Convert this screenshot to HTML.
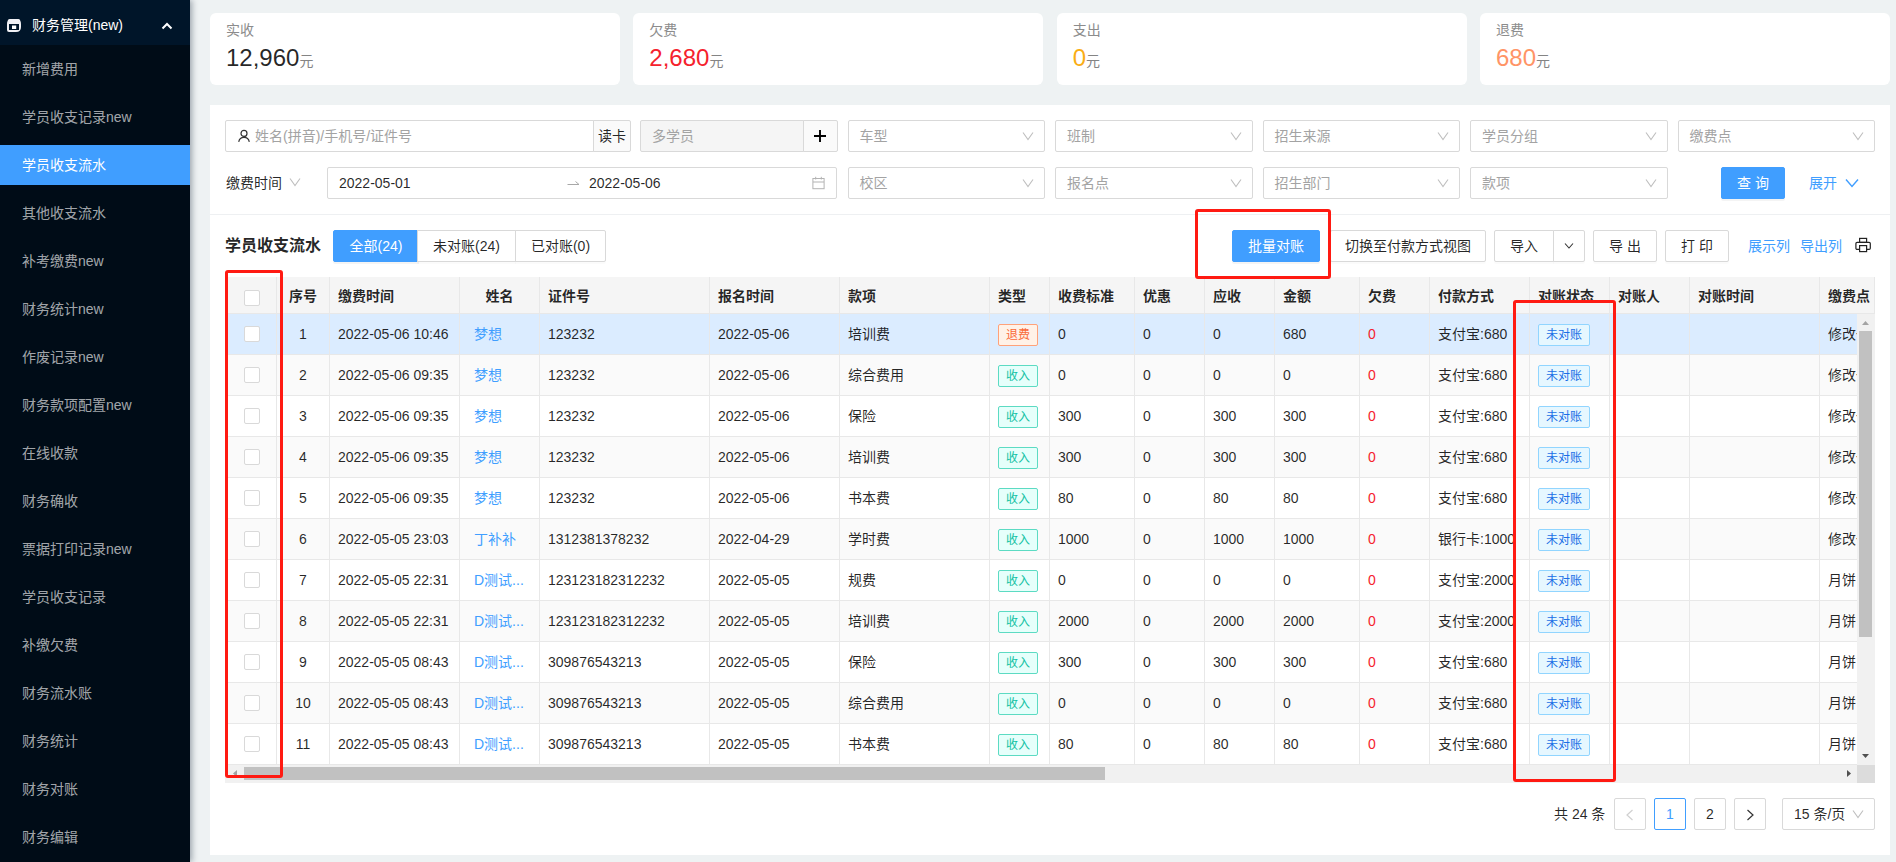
<!DOCTYPE html><html lang="zh-CN"><head><meta charset="utf-8"><title>学员收支流水</title><style>
*{box-sizing:border-box;margin:0;padding:0}
html,body{width:1896px;height:862px;overflow:hidden}
body{position:relative;background:#eef2f3;font-family:"Liberation Sans","Noto Sans CJK SC",sans-serif;font-size:14px;color:rgba(0,0,0,.85);line-height:1}
.abs{position:absolute}
#side{position:absolute;left:0;top:0;width:190px;height:862px;background:#000c17;box-shadow:2px 0 6px rgba(0,21,41,.35);z-index:5}
#side .hd{position:absolute;left:0;top:0;width:190px;height:45px;background:#001529;color:#fff}
#side .hd span{position:absolute;left:32px;top:18px;font-size:14px;white-space:nowrap}
#side .it{position:absolute;left:0;width:190px;height:40px;color:rgba(255,255,255,.65);font-size:14px;line-height:40px;padding-left:22px;white-space:nowrap}
#side .it.on{background:#409eff;color:#fff}
.card{position:absolute;top:13px;height:72px;width:410px;background:#fff;border-radius:6px}
.card .t{position:absolute;left:16px;top:9px;font-size:14px;color:#8c8c8c;line-height:16px}
.card .n{position:absolute;left:16px;top:29px;font-size:24px;line-height:32px;white-space:nowrap}
.card .n i{font-style:normal;font-size:14px;color:#848484}
#panel{position:absolute;left:210px;top:105px;width:1680px;height:750px;background:#fff}
.inp{position:absolute;height:32px;border:1px solid #d9d9d9;border-radius:2px;background:#fff;font-size:14px;line-height:30px;color:#a3a3a3;padding-left:11px;white-space:nowrap}
.sel svg.ar{position:absolute;right:10px;top:9px}
.btn{position:absolute;height:32px;border:1px solid #d9d9d9;border-radius:2px;background:#fff;font-size:14px;line-height:30px;color:rgba(0,0,0,.85);text-align:center;white-space:nowrap}
.btn{box-shadow:0 2px 0 rgba(0,0,0,.015)}
.btn.pri{background:#409eff;border-color:#409eff;color:#fff;box-shadow:0 2px 0 rgba(0,0,0,.045)}
.lnk{position:absolute;color:#409eff;font-size:14px;line-height:32px;white-space:nowrap}
.red{position:absolute;border:3px solid #ff1a12;border-radius:3px;z-index:9}
/* table */
#tbl{position:absolute;left:225px;top:277px;width:1650px;height:506px;overflow:hidden;background:#fff}
#tbl .edge{position:absolute;left:0;top:0;width:1px;height:488px;background:#e8e8e8;z-index:2}
.th{position:absolute;top:0;height:37px;background:#f5f5f5;border-right:1px solid #e8e8e8;border-bottom:1px solid #e8e8e8;font-weight:bold;font-size:14px;line-height:39px;padding-left:8px;white-space:nowrap;overflow:hidden;color:rgba(0,0,0,.85)}
.tr{position:absolute;left:0;width:1632px;height:41px}
.tr.odd{background:#fafafa}
.tr.hl{background:#dbecff}
.td{position:absolute;top:0;height:41px;border-right:1px solid #e8e8e8;border-bottom:1px solid #e8e8e8;font-size:14px;line-height:41px;padding-left:8px;white-space:nowrap;overflow:hidden;color:rgba(0,0,0,.85)}
.ck{position:absolute;width:16px;height:16px;border:1px solid #d9d9d9;border-radius:2px;background:#fff}
.tag{position:absolute;left:8px;top:10px;height:22px;border:1px solid;border-radius:2px;font-size:12px;line-height:20px;padding:0 7px}
.tg-in{color:#13c2a3;border-color:#5cdbc3;background:#e6fffb}
.tg-out{color:#fa6a38;border-color:#ffa27a;background:#fff2e8}
.tg-un{color:#1a6fe6;border-color:#91d5ff;background:#e6f7ff}
.pg{position:absolute;top:798px;height:32px;min-width:32px;border:1px solid #d9d9d9;border-radius:2px;background:#fff;font-size:14px;line-height:30px;text-align:center;color:rgba(0,0,0,.85)}
</style></head><body>
<div id="side"><div class="hd">
<svg class="abs" style="left:7px;top:19px" width="14" height="13" viewBox="0 0 14 13"><path d="M2.5 0 H11.5 Q13 0 13.4 2 Q14 3 14 5 V8 Q14 13 9 13 H2 Q0 13 0 11 V5 Q0 3 0.6 2 Q1 0 2.5 0Z" fill="#f0f0f4"/><rect x="2" y="5" width="10" height="6" fill="#001529"/><rect x="5" y="6.5" width="4.2" height="3.5" fill="#fff"/></svg>
<span>财务管理(new)</span>
<svg class="abs" style="left:161px;top:22px" width="12" height="8" viewBox="0 0 12 8"><path d="M1.5 6.5 L6 2 L10.5 6.5" fill="none" stroke="#fff" stroke-width="2"/></svg>
</div>
<div class="it" style="top:49px">新增费用</div>
<div class="it" style="top:97px">学员收支记录new</div>
<div class="it on" style="top:145px;height:40px">学员收支流水</div>
<div class="it" style="top:193px">其他收支流水</div>
<div class="it" style="top:241px">补考缴费new</div>
<div class="it" style="top:289px">财务统计new</div>
<div class="it" style="top:337px">作废记录new</div>
<div class="it" style="top:385px">财务款项配置new</div>
<div class="it" style="top:433px">在线收款</div>
<div class="it" style="top:481px">财务确收</div>
<div class="it" style="top:529px">票据打印记录new</div>
<div class="it" style="top:577px">学员收支记录</div>
<div class="it" style="top:625px">补缴欠费</div>
<div class="it" style="top:673px">财务流水账</div>
<div class="it" style="top:721px">财务统计</div>
<div class="it" style="top:769px">财务对账</div>
<div class="it" style="top:817px">财务编辑</div>
</div>
<div class="card" style="left:210.00px"><div class="t">实收</div><div class="n" style="color:rgba(0,0,0,.85)">12,960<i>元</i></div></div>
<div class="card" style="left:633.33px"><div class="t">欠费</div><div class="n" style="color:#f5222d">2,680<i>元</i></div></div>
<div class="card" style="left:1056.66px"><div class="t">支出</div><div class="n" style="color:#faad14">0<i>元</i></div></div>
<div class="card" style="left:1479.99px"><div class="t">退费</div><div class="n" style="color:#ff9466">680<i>元</i></div></div>
<div id="panel"></div>
<div class="inp" style="left:225px;top:120px;width:369px;padding-left:29px;border-radius:2px 0 0 2px">姓名(拼音)/手机号/证件号<svg class="abs" style="left:11px;top:8px" width="14" height="14" viewBox="0 0 14 14"><circle cx="7" cy="4.4" r="3" fill="none" stroke="#333" stroke-width="1.2"/><path d="M1.7 12.8 A5.4 5.4 0 0 1 12.3 12.8" fill="none" stroke="#333" stroke-width="1.2"/></svg></div>
<div class="inp" style="left:593px;top:120px;width:38px;padding:0;text-align:center;background:#fafafa;border-radius:0 2px 2px 0;color:rgba(0,0,0,.85)">读卡</div>
<div class="inp" style="left:640px;top:120px;width:164px;background:#f5f5f5;border-radius:2px 0 0 2px">多学员</div>
<div class="inp" style="left:803px;top:120px;width:35px;padding:0;background:#fafafa;border-radius:0 2px 2px 0"><svg class="abs" style="left:10px;top:9px" width="12" height="12" viewBox="0 0 12 12"><path d="M6 0 V12 M0 6 H12" stroke="#000" stroke-width="1.9"/></svg></div>
<div class="inp sel" style="left:847.5px;top:120px;width:197.5px">车型<svg class="ar" width="12" height="12" viewBox="0 0 12 12"><path d="M1 2.5 L6 9.5 L11 2.5" fill="none" stroke="#bfbfbf" stroke-width="1.1"/></svg></div>
<div class="inp sel" style="left:1055px;top:120px;width:197.5px">班制<svg class="ar" width="12" height="12" viewBox="0 0 12 12"><path d="M1 2.5 L6 9.5 L11 2.5" fill="none" stroke="#bfbfbf" stroke-width="1.1"/></svg></div>
<div class="inp sel" style="left:1262.5px;top:120px;width:197.5px">招生来源<svg class="ar" width="12" height="12" viewBox="0 0 12 12"><path d="M1 2.5 L6 9.5 L11 2.5" fill="none" stroke="#bfbfbf" stroke-width="1.1"/></svg></div>
<div class="inp sel" style="left:1470px;top:120px;width:197.5px">学员分组<svg class="ar" width="12" height="12" viewBox="0 0 12 12"><path d="M1 2.5 L6 9.5 L11 2.5" fill="none" stroke="#bfbfbf" stroke-width="1.1"/></svg></div>
<div class="inp sel" style="left:1677.5px;top:120px;width:197.5px">缴费点<svg class="ar" width="12" height="12" viewBox="0 0 12 12"><path d="M1 2.5 L6 9.5 L11 2.5" fill="none" stroke="#bfbfbf" stroke-width="1.1"/></svg></div>
<div class="abs" style="left:226px;top:167px;line-height:32px;font-size:14px;color:rgba(0,0,0,.85);white-space:nowrap">缴费时间<svg style="margin-left:7px" width="12" height="12" viewBox="0 0 12 12"><path d="M1 2.5 L6 9.5 L11 2.5" fill="none" stroke="#bfbfbf" stroke-width="1.1"/></svg></div>
<div class="inp" style="left:327px;top:167px;width:510px;color:rgba(0,0,0,.85)">2022-05-01<svg class="abs" style="left:239px;top:10px" width="13" height="10" viewBox="0 0 13 10"><path d="M0.5 6.5 H12 L8.5 3.5" fill="none" stroke="#a8a8a8" stroke-width="1"/></svg><span class="abs" style="left:261px;top:0">2022-05-06</span><svg class="abs" style="left:484px;top:8px" width="13" height="14" viewBox="0 0 13 14"><rect x="0.9" y="2.5" width="11.2" height="10.2" fill="none" stroke="#b3b3b3" stroke-width="1"/><path d="M1 6 H12 M3.7 0.8 V3.5 M9.3 0.8 V3.5" stroke="#b3b3b3" stroke-width="1"/></svg></div>
<div class="inp sel" style="left:847.5px;top:167px;width:197.5px">校区<svg class="ar" width="12" height="12" viewBox="0 0 12 12"><path d="M1 2.5 L6 9.5 L11 2.5" fill="none" stroke="#bfbfbf" stroke-width="1.1"/></svg></div>
<div class="inp sel" style="left:1055px;top:167px;width:197.5px">报名点<svg class="ar" width="12" height="12" viewBox="0 0 12 12"><path d="M1 2.5 L6 9.5 L11 2.5" fill="none" stroke="#bfbfbf" stroke-width="1.1"/></svg></div>
<div class="inp sel" style="left:1262.5px;top:167px;width:197.5px">招生部门<svg class="ar" width="12" height="12" viewBox="0 0 12 12"><path d="M1 2.5 L6 9.5 L11 2.5" fill="none" stroke="#bfbfbf" stroke-width="1.1"/></svg></div>
<div class="inp sel" style="left:1470px;top:167px;width:197.5px">款项<svg class="ar" width="12" height="12" viewBox="0 0 12 12"><path d="M1 2.5 L6 9.5 L11 2.5" fill="none" stroke="#bfbfbf" stroke-width="1.1"/></svg></div>
<div class="btn pri" style="left:1721px;top:167px;width:64px">查 询</div>
<div class="lnk" style="left:1809px;top:167px">展开<svg style="margin-left:8px;vertical-align:-1px" width="14" height="12" viewBox="0 0 14 12"><path d="M1 2.5 L7 9.5 L13 2.5" fill="none" stroke="#409eff" stroke-width="1.4"/></svg></div>
<div class="abs" style="left:210px;top:214px;width:1680px;height:1px;background:#eef0f2"></div>
<div class="abs" style="left:225px;top:230px;font-size:16px;font-weight:bold;line-height:32px;color:rgba(0,0,0,.85);white-space:nowrap">学员收支流水</div>
<div class="btn pri" style="left:333px;top:230px;width:86px;border-radius:2px 0 0 2px">全部(24)</div>
<div class="btn" style="left:417px;top:230px;width:99px;border-radius:0">未对账(24)</div>
<div class="btn" style="left:515px;top:230px;width:91px;border-radius:0 2px 2px 0">已对账(0)</div>
<div class="btn pri" style="left:1232px;top:230px;width:88px">批量对账</div>
<div class="btn" style="left:1330px;top:230px;width:156px">切换至付款方式视图</div>
<div class="btn" style="left:1494px;top:230px;width:60px;border-radius:2px 0 0 2px">导入</div>
<div class="btn" style="left:1553px;top:230px;width:32px;border-radius:0 2px 2px 0"><svg class="abs" style="left:10px;top:10px" width="10" height="10" viewBox="0 0 10 10"><path d="M1 2.5 L5 7 L9 2.5" fill="none" stroke="#333" stroke-width="1.1"/></svg></div>
<div class="btn" style="left:1593px;top:230px;width:64px">导 出</div>
<div class="btn" style="left:1665px;top:230px;width:64px">打 印</div>
<div class="lnk" style="left:1748px;top:230px">展示列</div>
<div class="lnk" style="left:1800px;top:230px">导出列</div>
<svg class="abs" style="left:1855px;top:237px" width="16" height="16" viewBox="0 0 16 16"><rect x="4.6" y="1.4" width="7" height="4" fill="none" stroke="#222" stroke-width="1.2"/><rect x="0.9" y="5.4" width="14.4" height="7" rx="1.2" fill="none" stroke="#222" stroke-width="1.2"/><rect x="4.6" y="8.6" width="7" height="6" fill="#fff" stroke="#222" stroke-width="1.2"/></svg>
<div id="tbl"><div class="edge"></div>
<div class="th" style="left:0px;width:52px"></div>
<div class="th" style="left:52px;width:53px;text-align:center;padding-left:0">序号</div>
<div class="th" style="left:105px;width:130px">缴费时间</div>
<div class="th" style="left:235px;width:80px;text-align:center;padding-left:0">姓名</div>
<div class="th" style="left:315px;width:170px">证件号</div>
<div class="th" style="left:485px;width:130px">报名时间</div>
<div class="th" style="left:615px;width:150px">款项</div>
<div class="th" style="left:765px;width:60px">类型</div>
<div class="th" style="left:825px;width:85px">收费标准</div>
<div class="th" style="left:910px;width:70px">优惠</div>
<div class="th" style="left:980px;width:70px">应收</div>
<div class="th" style="left:1050px;width:85px">金额</div>
<div class="th" style="left:1135px;width:70px">欠费</div>
<div class="th" style="left:1205px;width:100px">付款方式</div>
<div class="th" style="left:1305px;width:80px">对账状态</div>
<div class="th" style="left:1385px;width:80px">对账人</div>
<div class="th" style="left:1465px;width:130px">对账时间</div>
<div class="th" style="left:1595px;width:55px">缴费点</div>
<div class="ck" style="left:19px;top:13px"></div>
<div class="tr hl" style="top:37px">
<div class="td" style="left:0px;width:52px"><div class="ck" style="left:19px;top:12px"></div></div>
<div class="td" style="left:52px;width:53px;text-align:center;padding-left:0">1</div>
<div class="td" style="left:105px;width:130px">2022-05-06 10:46</div>
<div class="td" style="left:235px;width:80px;color:#409eff;padding-left:14px">梦想</div>
<div class="td" style="left:315px;width:170px">123232</div>
<div class="td" style="left:485px;width:130px">2022-05-06</div>
<div class="td" style="left:615px;width:150px">培训费</div>
<div class="td" style="left:765px;width:60px"><span class="tag tg-out">退费</span></div>
<div class="td" style="left:825px;width:85px">0</div>
<div class="td" style="left:910px;width:70px">0</div>
<div class="td" style="left:980px;width:70px">0</div>
<div class="td" style="left:1050px;width:85px">680</div>
<div class="td" style="left:1135px;width:70px;color:#f5222d">0</div>
<div class="td" style="left:1205px;width:100px">支付宝:680</div>
<div class="td" style="left:1305px;width:80px"><span class="tag tg-un">未对账</span></div>
<div class="td" style="left:1385px;width:80px"></div>
<div class="td" style="left:1465px;width:130px"></div>
<div class="td" style="left:1595px;width:55px">修改一</div>
</div>
<div class="tr odd" style="top:78px">
<div class="td" style="left:0px;width:52px"><div class="ck" style="left:19px;top:12px"></div></div>
<div class="td" style="left:52px;width:53px;text-align:center;padding-left:0">2</div>
<div class="td" style="left:105px;width:130px">2022-05-06 09:35</div>
<div class="td" style="left:235px;width:80px;color:#409eff;padding-left:14px">梦想</div>
<div class="td" style="left:315px;width:170px">123232</div>
<div class="td" style="left:485px;width:130px">2022-05-06</div>
<div class="td" style="left:615px;width:150px">综合费用</div>
<div class="td" style="left:765px;width:60px"><span class="tag tg-in">收入</span></div>
<div class="td" style="left:825px;width:85px">0</div>
<div class="td" style="left:910px;width:70px">0</div>
<div class="td" style="left:980px;width:70px">0</div>
<div class="td" style="left:1050px;width:85px">0</div>
<div class="td" style="left:1135px;width:70px;color:#f5222d">0</div>
<div class="td" style="left:1205px;width:100px">支付宝:680</div>
<div class="td" style="left:1305px;width:80px"><span class="tag tg-un">未对账</span></div>
<div class="td" style="left:1385px;width:80px"></div>
<div class="td" style="left:1465px;width:130px"></div>
<div class="td" style="left:1595px;width:55px">修改一</div>
</div>
<div class="tr" style="top:119px">
<div class="td" style="left:0px;width:52px"><div class="ck" style="left:19px;top:12px"></div></div>
<div class="td" style="left:52px;width:53px;text-align:center;padding-left:0">3</div>
<div class="td" style="left:105px;width:130px">2022-05-06 09:35</div>
<div class="td" style="left:235px;width:80px;color:#409eff;padding-left:14px">梦想</div>
<div class="td" style="left:315px;width:170px">123232</div>
<div class="td" style="left:485px;width:130px">2022-05-06</div>
<div class="td" style="left:615px;width:150px">保险</div>
<div class="td" style="left:765px;width:60px"><span class="tag tg-in">收入</span></div>
<div class="td" style="left:825px;width:85px">300</div>
<div class="td" style="left:910px;width:70px">0</div>
<div class="td" style="left:980px;width:70px">300</div>
<div class="td" style="left:1050px;width:85px">300</div>
<div class="td" style="left:1135px;width:70px;color:#f5222d">0</div>
<div class="td" style="left:1205px;width:100px">支付宝:680</div>
<div class="td" style="left:1305px;width:80px"><span class="tag tg-un">未对账</span></div>
<div class="td" style="left:1385px;width:80px"></div>
<div class="td" style="left:1465px;width:130px"></div>
<div class="td" style="left:1595px;width:55px">修改一</div>
</div>
<div class="tr odd" style="top:160px">
<div class="td" style="left:0px;width:52px"><div class="ck" style="left:19px;top:12px"></div></div>
<div class="td" style="left:52px;width:53px;text-align:center;padding-left:0">4</div>
<div class="td" style="left:105px;width:130px">2022-05-06 09:35</div>
<div class="td" style="left:235px;width:80px;color:#409eff;padding-left:14px">梦想</div>
<div class="td" style="left:315px;width:170px">123232</div>
<div class="td" style="left:485px;width:130px">2022-05-06</div>
<div class="td" style="left:615px;width:150px">培训费</div>
<div class="td" style="left:765px;width:60px"><span class="tag tg-in">收入</span></div>
<div class="td" style="left:825px;width:85px">300</div>
<div class="td" style="left:910px;width:70px">0</div>
<div class="td" style="left:980px;width:70px">300</div>
<div class="td" style="left:1050px;width:85px">300</div>
<div class="td" style="left:1135px;width:70px;color:#f5222d">0</div>
<div class="td" style="left:1205px;width:100px">支付宝:680</div>
<div class="td" style="left:1305px;width:80px"><span class="tag tg-un">未对账</span></div>
<div class="td" style="left:1385px;width:80px"></div>
<div class="td" style="left:1465px;width:130px"></div>
<div class="td" style="left:1595px;width:55px">修改一</div>
</div>
<div class="tr" style="top:201px">
<div class="td" style="left:0px;width:52px"><div class="ck" style="left:19px;top:12px"></div></div>
<div class="td" style="left:52px;width:53px;text-align:center;padding-left:0">5</div>
<div class="td" style="left:105px;width:130px">2022-05-06 09:35</div>
<div class="td" style="left:235px;width:80px;color:#409eff;padding-left:14px">梦想</div>
<div class="td" style="left:315px;width:170px">123232</div>
<div class="td" style="left:485px;width:130px">2022-05-06</div>
<div class="td" style="left:615px;width:150px">书本费</div>
<div class="td" style="left:765px;width:60px"><span class="tag tg-in">收入</span></div>
<div class="td" style="left:825px;width:85px">80</div>
<div class="td" style="left:910px;width:70px">0</div>
<div class="td" style="left:980px;width:70px">80</div>
<div class="td" style="left:1050px;width:85px">80</div>
<div class="td" style="left:1135px;width:70px;color:#f5222d">0</div>
<div class="td" style="left:1205px;width:100px">支付宝:680</div>
<div class="td" style="left:1305px;width:80px"><span class="tag tg-un">未对账</span></div>
<div class="td" style="left:1385px;width:80px"></div>
<div class="td" style="left:1465px;width:130px"></div>
<div class="td" style="left:1595px;width:55px">修改一</div>
</div>
<div class="tr odd" style="top:242px">
<div class="td" style="left:0px;width:52px"><div class="ck" style="left:19px;top:12px"></div></div>
<div class="td" style="left:52px;width:53px;text-align:center;padding-left:0">6</div>
<div class="td" style="left:105px;width:130px">2022-05-05 23:03</div>
<div class="td" style="left:235px;width:80px;color:#409eff;padding-left:14px">丁补补</div>
<div class="td" style="left:315px;width:170px">1312381378232</div>
<div class="td" style="left:485px;width:130px">2022-04-29</div>
<div class="td" style="left:615px;width:150px">学时费</div>
<div class="td" style="left:765px;width:60px"><span class="tag tg-in">收入</span></div>
<div class="td" style="left:825px;width:85px">1000</div>
<div class="td" style="left:910px;width:70px">0</div>
<div class="td" style="left:980px;width:70px">1000</div>
<div class="td" style="left:1050px;width:85px">1000</div>
<div class="td" style="left:1135px;width:70px;color:#f5222d">0</div>
<div class="td" style="left:1205px;width:100px">银行卡:1000</div>
<div class="td" style="left:1305px;width:80px"><span class="tag tg-un">未对账</span></div>
<div class="td" style="left:1385px;width:80px"></div>
<div class="td" style="left:1465px;width:130px"></div>
<div class="td" style="left:1595px;width:55px">修改一</div>
</div>
<div class="tr" style="top:283px">
<div class="td" style="left:0px;width:52px"><div class="ck" style="left:19px;top:12px"></div></div>
<div class="td" style="left:52px;width:53px;text-align:center;padding-left:0">7</div>
<div class="td" style="left:105px;width:130px">2022-05-05 22:31</div>
<div class="td" style="left:235px;width:80px;color:#409eff;padding-left:14px">D测试...</div>
<div class="td" style="left:315px;width:170px">123123182312232</div>
<div class="td" style="left:485px;width:130px">2022-05-05</div>
<div class="td" style="left:615px;width:150px">规费</div>
<div class="td" style="left:765px;width:60px"><span class="tag tg-in">收入</span></div>
<div class="td" style="left:825px;width:85px">0</div>
<div class="td" style="left:910px;width:70px">0</div>
<div class="td" style="left:980px;width:70px">0</div>
<div class="td" style="left:1050px;width:85px">0</div>
<div class="td" style="left:1135px;width:70px;color:#f5222d">0</div>
<div class="td" style="left:1205px;width:100px">支付宝:2000</div>
<div class="td" style="left:1305px;width:80px"><span class="tag tg-un">未对账</span></div>
<div class="td" style="left:1385px;width:80px"></div>
<div class="td" style="left:1465px;width:130px"></div>
<div class="td" style="left:1595px;width:55px">月饼</div>
</div>
<div class="tr odd" style="top:324px">
<div class="td" style="left:0px;width:52px"><div class="ck" style="left:19px;top:12px"></div></div>
<div class="td" style="left:52px;width:53px;text-align:center;padding-left:0">8</div>
<div class="td" style="left:105px;width:130px">2022-05-05 22:31</div>
<div class="td" style="left:235px;width:80px;color:#409eff;padding-left:14px">D测试...</div>
<div class="td" style="left:315px;width:170px">123123182312232</div>
<div class="td" style="left:485px;width:130px">2022-05-05</div>
<div class="td" style="left:615px;width:150px">培训费</div>
<div class="td" style="left:765px;width:60px"><span class="tag tg-in">收入</span></div>
<div class="td" style="left:825px;width:85px">2000</div>
<div class="td" style="left:910px;width:70px">0</div>
<div class="td" style="left:980px;width:70px">2000</div>
<div class="td" style="left:1050px;width:85px">2000</div>
<div class="td" style="left:1135px;width:70px;color:#f5222d">0</div>
<div class="td" style="left:1205px;width:100px">支付宝:2000</div>
<div class="td" style="left:1305px;width:80px"><span class="tag tg-un">未对账</span></div>
<div class="td" style="left:1385px;width:80px"></div>
<div class="td" style="left:1465px;width:130px"></div>
<div class="td" style="left:1595px;width:55px">月饼</div>
</div>
<div class="tr" style="top:365px">
<div class="td" style="left:0px;width:52px"><div class="ck" style="left:19px;top:12px"></div></div>
<div class="td" style="left:52px;width:53px;text-align:center;padding-left:0">9</div>
<div class="td" style="left:105px;width:130px">2022-05-05 08:43</div>
<div class="td" style="left:235px;width:80px;color:#409eff;padding-left:14px">D测试...</div>
<div class="td" style="left:315px;width:170px">309876543213</div>
<div class="td" style="left:485px;width:130px">2022-05-05</div>
<div class="td" style="left:615px;width:150px">保险</div>
<div class="td" style="left:765px;width:60px"><span class="tag tg-in">收入</span></div>
<div class="td" style="left:825px;width:85px">300</div>
<div class="td" style="left:910px;width:70px">0</div>
<div class="td" style="left:980px;width:70px">300</div>
<div class="td" style="left:1050px;width:85px">300</div>
<div class="td" style="left:1135px;width:70px;color:#f5222d">0</div>
<div class="td" style="left:1205px;width:100px">支付宝:680</div>
<div class="td" style="left:1305px;width:80px"><span class="tag tg-un">未对账</span></div>
<div class="td" style="left:1385px;width:80px"></div>
<div class="td" style="left:1465px;width:130px"></div>
<div class="td" style="left:1595px;width:55px">月饼</div>
</div>
<div class="tr odd" style="top:406px">
<div class="td" style="left:0px;width:52px"><div class="ck" style="left:19px;top:12px"></div></div>
<div class="td" style="left:52px;width:53px;text-align:center;padding-left:0">10</div>
<div class="td" style="left:105px;width:130px">2022-05-05 08:43</div>
<div class="td" style="left:235px;width:80px;color:#409eff;padding-left:14px">D测试...</div>
<div class="td" style="left:315px;width:170px">309876543213</div>
<div class="td" style="left:485px;width:130px">2022-05-05</div>
<div class="td" style="left:615px;width:150px">综合费用</div>
<div class="td" style="left:765px;width:60px"><span class="tag tg-in">收入</span></div>
<div class="td" style="left:825px;width:85px">0</div>
<div class="td" style="left:910px;width:70px">0</div>
<div class="td" style="left:980px;width:70px">0</div>
<div class="td" style="left:1050px;width:85px">0</div>
<div class="td" style="left:1135px;width:70px;color:#f5222d">0</div>
<div class="td" style="left:1205px;width:100px">支付宝:680</div>
<div class="td" style="left:1305px;width:80px"><span class="tag tg-un">未对账</span></div>
<div class="td" style="left:1385px;width:80px"></div>
<div class="td" style="left:1465px;width:130px"></div>
<div class="td" style="left:1595px;width:55px">月饼</div>
</div>
<div class="tr" style="top:447px">
<div class="td" style="left:0px;width:52px"><div class="ck" style="left:19px;top:12px"></div></div>
<div class="td" style="left:52px;width:53px;text-align:center;padding-left:0">11</div>
<div class="td" style="left:105px;width:130px">2022-05-05 08:43</div>
<div class="td" style="left:235px;width:80px;color:#409eff;padding-left:14px">D测试...</div>
<div class="td" style="left:315px;width:170px">309876543213</div>
<div class="td" style="left:485px;width:130px">2022-05-05</div>
<div class="td" style="left:615px;width:150px">书本费</div>
<div class="td" style="left:765px;width:60px"><span class="tag tg-in">收入</span></div>
<div class="td" style="left:825px;width:85px">80</div>
<div class="td" style="left:910px;width:70px">0</div>
<div class="td" style="left:980px;width:70px">80</div>
<div class="td" style="left:1050px;width:85px">80</div>
<div class="td" style="left:1135px;width:70px;color:#f5222d">0</div>
<div class="td" style="left:1205px;width:100px">支付宝:680</div>
<div class="td" style="left:1305px;width:80px"><span class="tag tg-un">未对账</span></div>
<div class="td" style="left:1385px;width:80px"></div>
<div class="td" style="left:1465px;width:130px"></div>
<div class="td" style="left:1595px;width:55px">月饼</div>
</div>
<div class="abs" style="left:1632px;top:37px;width:18px;height:451px;background:#f1f1f1"></div>
<div class="abs" style="left:1634px;top:54px;width:13px;height:306px;background:#c1c1c1"></div>
<svg class="abs" style="left:1637px;top:44px" width="7" height="4" viewBox="0 0 7 4"><path d="M0 4 L3.5 0 L7 4Z" fill="#a3a3a3"/></svg>
<svg class="abs" style="left:1637px;top:477px" width="7" height="4" viewBox="0 0 7 4"><path d="M0 0 L3.5 4 L7 0Z" fill="#505050"/></svg>
<div class="abs" style="left:0;top:488px;width:1650px;height:18px;background:#f1f1f1"></div>
<div class="abs" style="left:19px;top:490px;width:861px;height:13px;background:#c1c1c1"></div>
<div class="abs" style="left:1632px;top:488px;width:18px;height:18px;background:#dcdcdc"></div>
<svg class="abs" style="left:8px;top:493px" width="4" height="7" viewBox="0 0 4 7"><path d="M4 0 L0 3.5 L4 7Z" fill="#a3a3a3"/></svg>
<svg class="abs" style="left:1622px;top:493px" width="4" height="7" viewBox="0 0 4 7"><path d="M0 0 L4 3.5 L0 7Z" fill="#505050"/></svg>
</div>
<div class="red" style="left:225px;top:270px;width:58px;height:508px"></div>
<div class="red" style="left:1195px;top:209px;width:136px;height:70px"></div>
<div class="red" style="left:1513px;top:300px;width:103px;height:482px"></div>
<div class="abs" style="left:1554px;top:798px;line-height:32px;font-size:14px;white-space:nowrap;color:rgba(0,0,0,.85)">共 24 条</div>
<div class="pg" style="left:1614px;width:32px;color:#d0d0d0"><svg class="abs" style="left:10px;top:10px" width="10" height="12" viewBox="0 0 10 12"><path d="M7.5 1 L2 6 L7.5 11" fill="none" stroke="#d0d0d0" stroke-width="1.2"/></svg></div>
<div class="pg" style="left:1654px;width:32px;border-color:#409eff;color:#409eff">1</div>
<div class="pg" style="left:1694px;width:32px">2</div>
<div class="pg" style="left:1734px;width:32px"><svg class="abs" style="left:10px;top:10px" width="10" height="12" viewBox="0 0 10 12"><path d="M2.5 1 L8 6 L2.5 11" fill="none" stroke="#333" stroke-width="1.2"/></svg></div>
<div class="pg" style="left:1782px;width:93px;text-align:left;padding-left:11px">15 条/页<svg class="abs" style="right:10px;top:9px" width="12" height="12" viewBox="0 0 12 12"><path d="M1 2.5 L6 9.5 L11 2.5" fill="none" stroke="#bfbfbf" stroke-width="1.1"/></svg></div>
</body></html>
